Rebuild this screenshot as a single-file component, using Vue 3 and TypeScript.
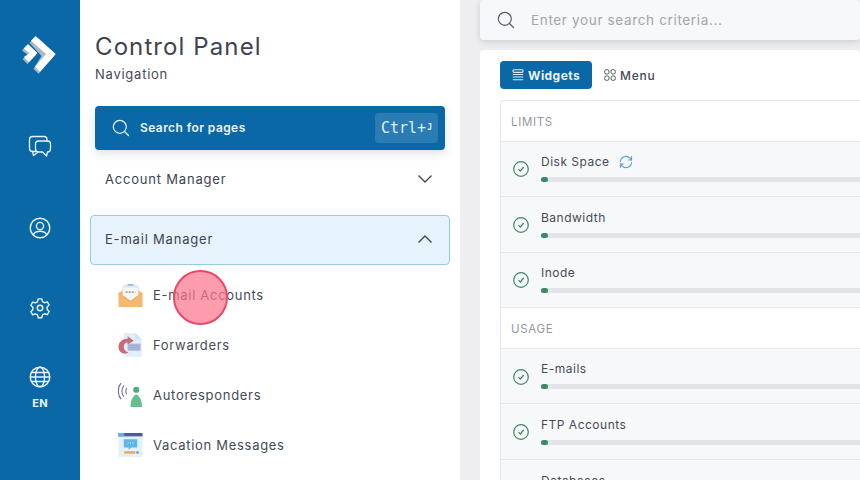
<script setup lang="ts">
interface Row { name: string; sync?: boolean }
interface Group { title: string; rows: Row[] }

const groups: Group[] = [
  { title: 'LIMITS', rows: [{ name: 'Disk Space', sync: true }, { name: 'Bandwidth' }, { name: 'Inode' }] },
  { title: 'USAGE', rows: [{ name: 'E-mails' }, { name: 'FTP Accounts' }, { name: 'Databases' }] },
]
</script>

<template>
  <div class="page">
    <aside class="rail">
      <div class="logo">
        <svg width="40" height="44" viewBox="20 32 40 44">
          <g fill="#a9b9c8" transform="translate(-1.5 2)">
            <path d="M35.700 36L55.700 54L40 71.700L35 66.700L43 54L31 40.700Z" />
            <path d="M28 44L37.500 53L29 62L24 57L29.500 53L23.500 48.500Z" />
          </g>
          <g fill="#fff">
            <path d="M35.700 36L55.700 54L40 71.700L35 66.700L46 54L31 40.700Z" />
            <path d="M28 44L37.500 53L29 62L24 57L29.500 53L23.500 48.500Z" />
          </g>
        </svg>
      </div>
      <div class="rail-item chat">
        <svg width="24" height="24" viewBox="0 0 24 24" fill="none" stroke="#eaf4fb" stroke-width="1.3" stroke-linejoin="round" stroke-linecap="round">
          <path d="M8 16.500H4.500C2.800 16.500 1.500 15.200 1.500 13.500V4.500C1.500 2.800 2.800 1.500 4.500 1.500H16C17.700 1.500 19 2.800 19 4.500V6" />
          <path d="M4.500 16.500L5.500 20.500L9.500 17.500" />
          <path d="M10.500 6H19.500C21.200 6 22.500 7.300 22.500 9V14C22.500 15.700 21.200 17 19.500 17L18.500 21L14.500 17H10.500C8.800 17 7.500 15.700 7.500 14V9C7.500 7.300 8.800 6 10.500 6Z" />
        </svg>
      </div>
      <div class="rail-item user">
        <svg width="22" height="22" viewBox="0 0 22 22" fill="none" stroke="#eaf4fb" stroke-width="1.4">
          <circle cx="11" cy="11" r="9.800" />
          <circle cx="11" cy="9" r="3.600" />
          <path d="M4.200 18C5.500 15.200 8 14.300 11 14.300S16.500 15.200 17.800 18" />
        </svg>
      </div>
      <div class="rail-item gear">
        <svg width="22" height="22" viewBox="0 0 24 24" fill="none" stroke="#eaf4fb" stroke-width="1.5" stroke-linejoin="round">
          <circle cx="12" cy="12" r="3" />
          <path d="M10 2h4l.7 3 2.300 1.300 3-.9 2 3.400-2.200 2.200v2.600l2.200 2.200-2 3.400-3-.9-2.300 1.300-.7 3h-4l-.7-3L7 18.500l-3 .9-2-3.400L4.200 13.800v-2.600L2 9l2-3.400 3 .9L9.300 5z" />
        </svg>
      </div>
      <div class="rail-item globe">
        <svg width="22" height="22" viewBox="0 0 22 22" fill="none" stroke="#eaf4fb" stroke-width="1.4">
          <circle cx="11" cy="11" r="9.800" />
          <ellipse cx="11" cy="11" rx="4.600" ry="9.800" />
          <path d="M2.600 6.500H19.400M1.400 11H20.600M2.600 15.500H19.400" />
        </svg>
        <span class="lang">EN</span>
      </div>
    </aside>

    <nav class="panel">
      <h1 class="title">Control Panel</h1>
      <p class="subtitle">Navigation</p>
      <div class="page-search">
        <svg width="18" height="18" viewBox="0 0 18 18" fill="none" stroke="#eaf4fb" stroke-width="1.2" stroke-linecap="round">
          <circle cx="7.800" cy="7.800" r="6.500" />
          <path d="M12.500 12.500L16.500 16.500" />
        </svg>
        <span class="page-search-text">Search for pages</span>
        <span class="kbd">Ctrl+<small>J</small></span>
      </div>
      <div class="acc">
        <span>Account Manager</span>
        <svg width="16" height="10" viewBox="0 0 16 10" fill="none" stroke="#3d4450" stroke-width="1.3"><path d="M1.500 1.500L8 8L14.500 1.500" /></svg>
      </div>
      <div class="acc open">
        <span>E-mail Manager</span>
        <svg width="16" height="10" viewBox="0 0 16 10" fill="none" stroke="#3d4450" stroke-width="1.3"><path d="M1.500 8.500L8 2L14.500 8.500" /></svg>
      </div>
      <ul class="links">
        <li>
          <svg width="25" height="26" viewBox="0 0 26 26">
            <path d="M7 2h12l3 3v8H4V5z" fill="#dcebf5" />
            <path d="M10 2.500h6" stroke="#7d93b5" stroke-width="1.200" />
            <path d="M0.500 11L5 8V14H21V8L25.500 11V25.500H0.500Z" fill="#f6b86f" />
            <path d="M5 5.500H21V13L13 19L5 13Z" fill="#f1f7fb" />
            <path d="M8 10h10" stroke="#c09a80" stroke-width="2" stroke-dasharray="2 1.200" />
            <path d="M0.500 11L13 20L25.500 11" fill="none" stroke="#eda95c" stroke-width="0.800" />
          </svg>
          <span>E-mail Accounts</span>
        </li>
        <li>
          <svg width="25" height="26" viewBox="0 0 26 26">
            <path d="M6 0.500H18L24.500 7V25.500H6Z" fill="#e0eff9" />
            <path d="M18 0.500L24.500 7H18Z" fill="#cbe3f3" />
            <path d="M10 11.500H23.500V19H10Z" fill="#aebbdc" />
            <path d="M11 13.500h12M11 15.500h12M11 17.500h12" stroke="#96a5cf" stroke-width="0.700" />
            <path d="M10 6.500V4L16.500 8.500L10 12.500V10.500C7.500 10.500 6 12.500 6 15C6 18 8 20 11 20.500C8 23.500 0.500 21.500 0.500 15C0.500 10 4.500 6.500 10 6.500Z" fill="#cd6a78" />
          </svg>
          <span>Forwarders</span>
        </li>
        <li>
          <svg width="25" height="26" viewBox="0 0 26 26">
            <path d="M3 1C-0.500 5-0.500 13 3 17M6 3.500C3.500 7 3.500 11 6 14.500M9 6C7.800 7.500 7.800 10.500 9 12" fill="none" stroke="#6d6a9c" stroke-width="1.100" stroke-linecap="round" />
            <circle cx="19" cy="7.500" r="3.200" fill="#4cae78" />
            <path d="M13 25.500C13 21 14 17 15.500 15.500C16.500 14 17.500 12.500 19 12.500S21.500 14 22.500 15.500C24 17 25 21 25 25.500Z" fill="#63c08d" />
          </svg>
          <span>Autoresponders</span>
        </li>
        <li>
          <svg width="25" height="26" viewBox="0 0 26 26">
            <rect x="0.500" y="0.500" width="25" height="25" fill="#e2f0fa" />
            <rect x="0.500" y="0.500" width="25" height="3.500" fill="#4f5b93" />
            <rect x="0.500" y="0.500" width="6" height="3.500" fill="#62b0e0" />
            <path d="M6 7H20V15.500H14L11 18V15.500H6Z" fill="#5fb5ee" />
            <path d="M10 11h1M12.500 11h1M15 11h1" stroke="#eaf6fd" stroke-width="1" />
            <path d="M6.500 19.500H18V22H6.500Z" fill="#f2a35d" />
            <rect x="19" y="19.500" width="2.500" height="2.500" fill="#5b9cc9" />
          </svg>
          <span>Vacation Messages</span>
        </li>
      </ul>
    </nav>

    <main class="content">
      <div class="searchbar">
        <svg width="18" height="18" viewBox="0 0 18 18" fill="none" stroke="#555d68" stroke-width="1.200" stroke-linecap="round">
          <circle cx="7.800" cy="7.800" r="6.500" />
          <path d="M12.500 12.500L16.500 16.500" />
        </svg>
        <span>Enter your search criteria...</span>
      </div>
      <section class="card">
        <div class="tabs">
          <div class="tab active">
            <svg width="12" height="12" viewBox="0 0 12 12" fill="none" stroke="#dcecf7" stroke-width="1.100">
              <rect x="1" y="0.800" width="10" height="2.600" rx="0.800" />
              <path d="M0.800 5.500h10.400M0.800 8h10.400M0.800 10.700h10.400" />
            </svg>
            <span>Widgets</span>
          </div>
          <div class="tab">
            <svg width="12" height="12" viewBox="0 0 12 12" fill="none" stroke="#4a515c" stroke-width="1">
              <rect x="0.700" y="0.700" width="4.300" height="4.300" rx="1.600" />
              <rect x="7" y="0.700" width="4.300" height="4.300" rx="1.600" />
              <rect x="0.700" y="7" width="4.300" height="4.300" rx="1.600" />
              <rect x="7" y="7" width="4.300" height="4.300" rx="1.600" />
            </svg>
            <span>Menu</span>
          </div>
        </div>
        <div class="list">
          <template v-for="g in groups" :key="g.title">
            <div class="group-title">{{ g.title }}</div>
            <div v-for="r in g.rows" :key="r.name" class="row">
              <svg class="check" width="16" height="16" viewBox="0 0 16 16" fill="none" stroke="#3a8a63" stroke-width="1.200">
                <circle cx="8" cy="8" r="7.300" />
                <path d="M5.500 8.200L7.300 10L10.700 6" />
              </svg>
              <div class="row-body">
                <div class="row-name">
                  <span>{{ r.name }}</span>
                  <svg v-if="r.sync" width="14" height="14" viewBox="0 0 14 14" fill="none" stroke="#5aa0cc" stroke-width="1.200" stroke-linecap="round">
                    <path d="M1.500 6.500A5.500 5.500 0 0 1 11 3.200L12.500 5" />
                    <path d="M12.500 1.800V5H9.500" />
                    <path d="M12.500 7.500A5.500 5.500 0 0 1 3 10.800L1.500 9" />
                    <path d="M1.500 12.200V9H4.500" />
                  </svg>
                </div>
                <div class="bar"><div class="fill"></div></div>
              </div>
            </div>
          </template>
        </div>
      </section>
    </main>

    <div class="click-marker"></div>
  </div>
</template>

<style>
html, body { margin: 0; overflow: hidden; }
</style>

<style scoped>
.page {
  position: relative;
  display: flex;
  width: 860px;
  height: 480px;
  overflow: hidden;
  background: #eeeef1;
  font-family: "Inter", "Open Sans", sans-serif;
  color: #3d4450;
}
.rail {
  flex: none;
  width: 80px;
  background: #0b68a6;
  display: flex;
  flex-direction: column;
  align-items: center;
}
.logo { height: 44px; margin-top: 32px; }
.rail-item { display: flex; flex-direction: column; align-items: center; }
.chat { margin-top: 59px; }
.user { margin-top: 58px; }
.gear { margin-top: 58px; }
.globe { margin-top: 47px; }
.lang { margin-top: 8px; font-size: 11px; font-weight: 700; line-height: 14px; color: #eaf4fb; letter-spacing: 0.2px; }

.panel {
  flex: none;
  width: 380px;
  box-sizing: border-box;
  background: #fff;
  padding: 32px 10px 0;
}
.title { margin: 0 0 0 5px; font-size: 24px; line-height: 30px; font-weight: 400; letter-spacing: 1.1px; color: #3d4450; }
.subtitle { margin: 4px 0 0 5px; font-size: 13px; line-height: 16px; letter-spacing: 0.75px; color: #444b55; }
.page-search {
  margin: 24px 5px 5px;
  height: 44px;
  box-sizing: border-box;
  padding: 0 7px 0 17px;
  background: #0b68a6;
  border-radius: 4px;
  box-shadow: 0 4px 10px rgba(20, 60, 100, 0.14);
  display: flex;
  align-items: center;
  color: #eaf4fb;
}
.page-search-text { margin-left: 10px; margin-top: -2px; font-size: 12px; font-weight: 600; letter-spacing: 0.42px; }
.kbd {
  margin-left: auto;
  height: 30px;
  width: 63px;
  box-sizing: border-box;
  background: #2a7cb3;
  border-radius: 4px;
  display: flex;
  align-items: center;
  justify-content: center;
  font-family: "DejaVu Sans Mono", monospace;
  font-size: 15px;
  font-weight: 400;
  color: #dff0fa;
}
.kbd small { font-size: 8px; margin-left: 1px; margin-top: -2px; font-weight: 700; }
.acc {
  display: flex;
  align-items: center;
  justify-content: space-between;
  height: 50px;
  box-sizing: border-box;
  padding: 0 16px 2px 14px;
  font-size: 13px;
  letter-spacing: 0.8px;
  color: #3d4450;
  border: 1px solid transparent;
  border-radius: 4px;
}
.acc.open { margin-top: 10px; background: #e6f3fc; border-color: #98c9e2; }
.links { list-style: none; margin: 5px 0 0; padding: 0 0 0 28px; }
.links li { display: flex; align-items: center; gap: 10px; height: 50px; font-size: 13px; letter-spacing: 0.7px; color: #444b55; }
.links svg { flex: none; }

.content { flex: 1; min-width: 0; box-sizing: border-box; padding: 0 0 0 20px; }
.searchbar {
  height: 40px;
  box-sizing: border-box;
  padding: 0 0 0 17px;
  background: #f6f8fa;
  border-radius: 4px;
  box-shadow: 0 2px 6px rgba(40, 50, 70, 0.16);
  display: flex;
  align-items: center;
  gap: 16px;
  font-size: 13.500px;
  letter-spacing: 0.65px;
  color: #a2a6ad;
}
.card {
  margin-top: 10px;
  height: 440px;
  box-sizing: border-box;
  background: #fff;
  border-radius: 4px;
  padding: 11px 0 0 20px;
  overflow: hidden;
}
.tabs { display: flex; gap: 12px; align-items: center; }
.tab {
  display: flex;
  align-items: center;
  gap: 4px;
  height: 28px;
  font-size: 12px;
  font-weight: 500;
  letter-spacing: 0.75px;
  color: #444b55;
}
.tab.active {
  width: 92px;
  box-sizing: border-box;
  padding-left: 12px;
  background: #0b68a6;
  border-radius: 4px;
  color: #eaf4fb;
  font-weight: 700;
  letter-spacing: 0.45px;
}
.list { margin-top: 11px; border: 1px solid #e4e6ea; border-right: 0; border-bottom: 0; border-radius: 4px 0 0 0; }
.group-title {
  height: 40.500px;
  box-sizing: border-box;
  padding: 2px 0 0 10px;
  display: flex;
  align-items: center;
  font-size: 11.500px;
  letter-spacing: 0.65px;
  color: #93979e;
  border-bottom: 1px solid #e4e6ea;
}
.row {
  height: 55.600px;
  box-sizing: border-box;
  display: flex;
  align-items: center;
  padding-left: 12px;
  background: #f7f8fa;
  border-bottom: 1px solid #e4e6ea;
}
.check { flex: none; margin-top: 1px; }
.row-body { flex: 1; margin-left: 12px; margin-top: -3px; }
.row-name { display: flex; align-items: center; gap: 9px; height: 18px; font-size: 12px; letter-spacing: 0.5px; color: #444b55; }
.bar { margin-top: 6.500px; height: 5px; background: #e3e5e8; border-radius: 3px 0 0 3px; }
.fill { width: 7px; height: 5px; background: #3a8a63; border-radius: 3px; }

.click-marker {
  position: absolute;
  left: 173px;
  top: 270px;
  width: 55px;
  height: 55px;
  box-sizing: border-box;
  border-radius: 50%;
  background: rgba(252, 118, 140, 0.72);
  border: 2px solid #e84a66;
}
</style>
